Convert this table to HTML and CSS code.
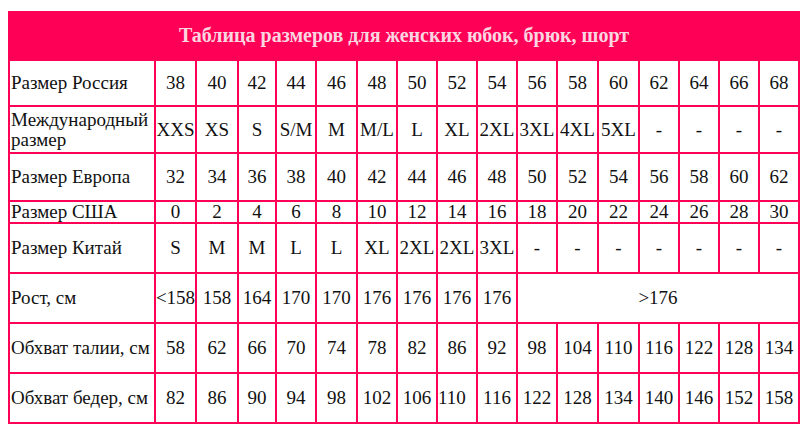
FILE: index.html
```html
<!DOCTYPE html>
<html lang="ru">
<head>
<meta charset="utf-8">
<link rel="stylesheet" href="styles.css">
</head>
<body>
<div class="chart">
  <div class="title">Таблица размеров для женских юбок, брюк, шорт</div>

  <div class="label">Размер Россия</div>
  <div>38</div><div>40</div><div>42</div><div>44</div><div>46</div><div>48</div><div>50</div><div>52</div><div>54</div><div>56</div><div>58</div><div>60</div><div>62</div><div>64</div><div>66</div><div>68</div>

  <div class="label">Международный размер</div>
  <div>XXS</div><div>XS</div><div>S</div><div>S/M</div><div>M</div><div>M/L</div><div>L</div><div>XL</div><div>2XL</div><div>3XL</div><div>4XL</div><div>5XL</div><div>-</div><div>-</div><div>-</div><div>-</div>

  <div class="label">Размер Европа</div>
  <div>32</div><div>34</div><div>36</div><div>38</div><div>40</div><div>42</div><div>44</div><div>46</div><div>48</div><div>50</div><div>52</div><div>54</div><div>56</div><div>58</div><div>60</div><div>62</div>

  <div class="label">Размер США</div>
  <div>0</div><div>2</div><div>4</div><div>6</div><div>8</div><div>10</div><div>12</div><div>14</div><div>16</div><div>18</div><div>20</div><div>22</div><div>24</div><div>26</div><div>28</div><div>30</div>

  <div class="label">Размер Китай</div>
  <div>S</div><div>M</div><div>M</div><div>L</div><div>L</div><div>XL</div><div>2XL</div><div>2XL</div><div>3XL</div><div>-</div><div>-</div><div>-</div><div>-</div><div>-</div><div>-</div><div>-</div>

  <div class="label">Рост, см</div>
  <div>&lt;158</div><div>158</div><div>164</div><div>170</div><div>170</div><div>176</div><div>176</div><div>176</div><div>176</div><div class="span7">&gt;176</div>

  <div class="label">Обхват талии, см</div>
  <div>58</div><div>62</div><div>66</div><div>70</div><div>74</div><div>78</div><div>82</div><div>86</div><div>92</div><div>98</div><div>104</div><div>110</div><div>116</div><div>122</div><div>128</div><div>134</div>

  <div class="label">Обхват бедер, см</div>
  <div>82</div><div>86</div><div>90</div><div>94</div><div>98</div><div>102</div><div>106</div><div class="shift">110</div><div>116</div><div>122</div><div>128</div><div>134</div><div>140</div><div>146</div><div>152</div><div>158</div>
</div>
</body>
</html>
```

FILE: styles.css
```css
html, body {
  margin: 0;
  padding: 0;
  background: #ffffff;
}

body {
  padding: 11px 8px 0 8px;
  font-family: "Liberation Serif", "Times New Roman", serif;
  color: #111111;
}

.chart {
  display: grid;
  width: 792px;
  box-sizing: border-box;
  grid-template-columns: 144px 39px 40px 36px 38px 39px 38px 38px 38px 38px 38px 39px 39px 38px 38px 38px 38px;
  grid-template-rows: 48px 44px 45px 46px 20px 48px 48px 48px 48px;
  gap: 2px;
  padding: 0 2px 2px 2px;
  background: #ff0057;
  font-size: 19px;
  line-height: 20px;
}

.chart > div {
  background: #ffffff;
  display: flex;
  align-items: center;
  justify-content: center;
  white-space: nowrap;
  text-align: center;
}

.chart > .title {
  grid-column: 1 / -1;
  background: #ff0057;
  color: #fbd6e0;
  font-weight: bold;
  font-size: 20px;
  margin: 0 -2px;
}

.chart > .label {
  justify-content: flex-start;
  text-align: left;
  white-space: normal;
  padding-left: 1px;
}

.chart > .span7 {
  grid-column: span 7;
}

.chart > .shift {
  justify-content: flex-start;
}
```
